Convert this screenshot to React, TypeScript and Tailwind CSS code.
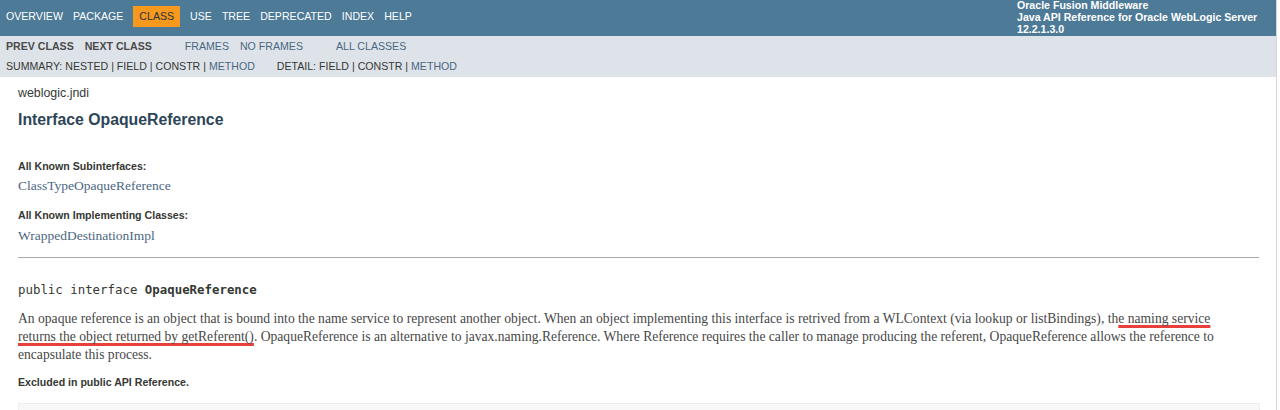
import React from 'react';

const sans = 'font-["Liberation_Sans",Arial,sans-serif]';
const serif = 'font-["Liberation_Serif","Times_New_Roman",serif]';
const mono = 'font-["DejaVu_Sans_Mono",monospace]';

const topNav = ['OVERVIEW', 'PACKAGE', 'CLASS', 'USE', 'TREE', 'DEPRECATED', 'INDEX', 'HELP'];

const TopBar: React.FC = () => (
  <div className={`flex h-[36px] bg-[#4d7a97] ${sans}`}>
    <ul className="flex pl-[1px]">
      {topNav.map((item) => {
        const active = item === 'CLASS';
        return (
          <li
            key={item}
            className={`mt-[6px] flex h-[21px] items-center text-[10.6px] ${
              active ? 'bg-[#f8981d] px-[6px] text-[#253441] mx-[5px]' : 'px-[5px] text-white'
            }`}
          >
            {item}
          </li>
        );
      })}
    </ul>
    <div className="ml-auto w-[259px] -mt-[1px] text-[10.6px] font-bold leading-[12px] text-white">
      <div>Oracle Fusion Middleware</div>
      <div>Java API Reference for Oracle WebLogic Server</div>
      <div>12.2.1.3.0</div>
    </div>
  </div>
);

const SubNav: React.FC = () => (
  <div className={`h-[41px] bg-[#dee3e9] pt-[1px] text-[10.6px] ${sans}`}>
    <div className="flex h-[20px] items-center pl-[6px]">
      <span className="font-bold text-[#4a4a4a]">PREV CLASS</span>
      <span className="ml-[11px] font-bold text-[#4a4a4a]">NEXT CLASS</span>
      <span className="ml-[33px] text-[#4a6782]">FRAMES</span>
      <span className="ml-[11px] text-[#4a6782]">NO FRAMES</span>
      <span className="ml-[33px] text-[#4a6782]">ALL CLASSES</span>
    </div>
    <div className="flex h-[20px] items-center pl-[6px] text-[#353833]">
      <span>
        SUMMARY:&nbsp;NESTED&nbsp;|&nbsp;FIELD&nbsp;|&nbsp;CONSTR&nbsp;|&nbsp;
        <span className="text-[#4a6782]">METHOD</span>
      </span>
      <span className="ml-[22px]">
        DETAIL:&nbsp;FIELD&nbsp;|&nbsp;CONSTR&nbsp;|&nbsp;
        <span className="text-[#4a6782]">METHOD</span>
      </span>
    </div>
  </div>
);

// hand-drawn red marks from the screenshot
const redMark =
  'underline decoration-[#e8413c] decoration-[3px] underline-offset-[2px] [text-decoration-skip-ink:none]';

export default function App() {
  return (
    <div className="flex h-[410px] w-[1280px] overflow-hidden bg-white">
      <div className="w-[1277px] shrink-0 border-r border-[#d6d6d6]">
        <TopBar />
        <SubNav />

        <div className="px-[18px]">
          <div className={`mt-[8px] text-[12.4px] leading-[16px] text-[#353833] ${sans}`}>weblogic.jndi</div>
          <h2 className={`mt-[9px] text-[15.8px] font-bold leading-[20px] text-[#2c4557] ${sans}`}>
            Interface OpaqueReference
          </h2>

          <dl className="mt-[29px]">
            <dt className={`text-[10.6px] font-bold leading-[14px] text-[#353833] ${sans}`}>All Known Subinterfaces:</dt>
            <dd className={`mt-[4px] text-[13.5px] leading-[18px] text-[#4a6782] ${serif}`}>ClassTypeOpaqueReference</dd>
            <dt className={`mt-[13px] text-[10.6px] font-bold leading-[14px] text-[#353833] ${sans}`}>
              All Known Implementing Classes:
            </dt>
            <dd className={`mt-[5px] text-[13.5px] leading-[18px] text-[#4a6782] ${serif}`}>WrappedDestinationImpl</dd>
          </dl>

          <hr className="mt-[12px] w-[1241px] border-t border-[#a9a9a9]" />

          <pre className={`mt-[24px] text-[12.4px] leading-[16px] text-[#353833] ${mono}`}>
            public interface <span className="font-bold">OpaqueReference</span>
          </pre>

          <p className={`mt-[12px] w-[1230px] text-[13.6px] leading-[18px] text-[#474747] ${serif}`}>
            An opaque reference is an object that is bound into the name service to represent another object. When an
            object implementing this interface is retrived from a WLContext (via lookup or listBindings), th
            <span className={redMark}>e naming service</span>
            <br />
            <span className={redMark}>returns the object returned by getReferent()</span>. OpaqueReference is an
            alternative to javax.naming.Reference. Where Reference requires the caller to manage producing the referent,
            OpaqueReference allows the reference to
            <br />
            encapsulate this process.
          </p>

          <div className={`mt-[11px] text-[10.6px] font-bold leading-[14px] text-[#353833] ${sans}`}>
            Excluded in public API Reference.
          </div>

          <div className="mt-[14px] h-[40px] w-[1242px] border border-[#eeeeee] bg-[#f8f8f8]" />
        </div>
      </div>
    </div>
  );
}
